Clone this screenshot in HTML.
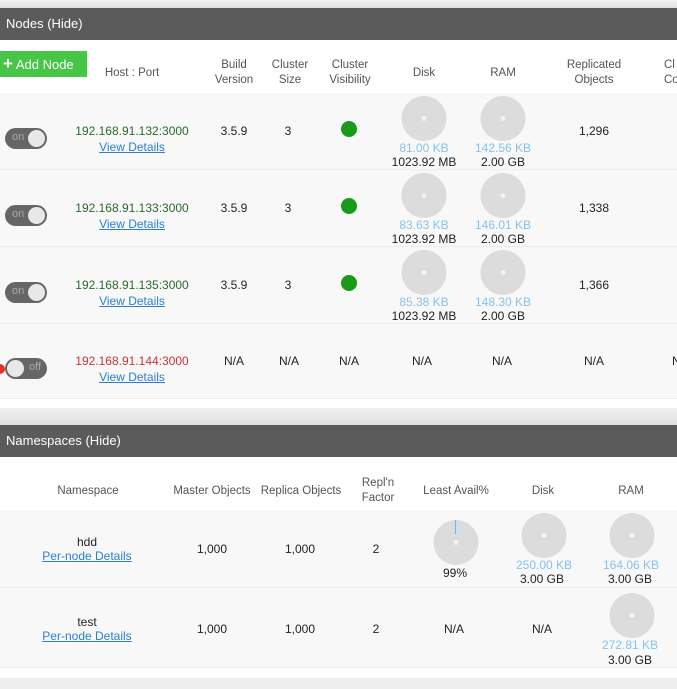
<!DOCTYPE html>
<html><head><meta charset="utf-8"><style>
*{margin:0;padding:0;box-sizing:border-box}
body{width:677px;height:689px;overflow:hidden;background:#eeeeee;font-family:"Liberation Sans",sans-serif;font-size:12px;color:#222;position:relative}
.a{position:absolute}
.bar{position:absolute;left:0;width:677px;height:32px;background:#5b5b5b;color:#fff;font-size:13px;line-height:32px;padding-left:6px}
.white{position:absolute;left:0;width:677px;background:#fff}
.row{position:absolute;left:0;width:677px;background:#f8f8f8;border-bottom:1px solid #ececec}
.c{position:absolute;text-align:center;transform:translateX(-50%);white-space:nowrap}
.h{color:#555;font-size:11.5px;line-height:15px}
.pie{position:absolute;width:45px;height:45px;border-radius:50%;background:#dcdcdc;transform:translateX(-50%)}
.pie:after{content:"";position:absolute;left:20px;top:20px;width:5px;height:5px;border-radius:50%;background:#f2f2f2}
.blue{color:#86c3ec}
.lnk{color:#2a7fd4;text-decoration:underline}
.tog{position:absolute;left:5px;width:42px;height:21px;border-radius:11px;background:#666}
.tog i{position:absolute;top:2px;width:17px;height:17px;border-radius:50%;background:#e8e8e8}
.tog span{position:absolute;top:3px;font-size:11px;color:#aaa}
.dot{position:absolute;width:16px;height:16px;border-radius:50%;background:#1a9a1a;transform:translateX(-50%)}
</style></head><body>
<div class="a" style="left:0;top:0;width:677px;height:8px;background:linear-gradient(#f4f4f4,#e2e2e2)"></div>
<div class="bar" style="top:8px">Nodes (Hide)</div>
<div class="white" style="top:40px;height:53px"></div>
<div class="a" style="left:0;top:51px;width:87px;height:26px;background:#47c547;color:#fff;font-size:13px;line-height:26px;padding-left:3px"><b style="font-size:17px">+</b> Add Node</div>
<div class="c h" style="left:132px;top:66px">Host : Port</div>
<div class="c h" style="left:234px;top:58px">Build<br>Version</div>
<div class="c h" style="left:290px;top:58px">Cluster<br>Size</div>
<div class="c h" style="left:350px;top:58px">Cluster<br>Visibility</div>
<div class="c h" style="left:424px;top:66px">Disk</div>
<div class="c h" style="left:503px;top:66px">RAM</div>
<div class="c h" style="left:594px;top:58px">Replicated<br>Objects</div>
<div class="a h" style="left:664px;top:58px;line-height:15px">Cl<br>Conn</div>

<div class="row" style="top:93px;height:77px"></div>
<div class="row" style="top:170px;height:77px"></div>
<div class="row" style="top:247px;height:77px"></div>
<div class="row" style="top:324px;height:75px"></div>
<div class="white" style="top:399px;height:9px"></div>
<div class="a" style="left:0;top:408px;width:677px;height:17px;background:linear-gradient(#efefef,#e0e0e0)"></div>

<!-- row 1 -->
<div class="tog" style="top:128px"><span style="left:7px">on</span><i style="right:2px"></i></div>
<div class="c" style="left:132px;top:124px;color:#2a6a2a">192.168.91.132:3000</div>
<div class="c lnk" style="left:132px;top:140px">View Details</div>
<div class="c" style="left:234px;top:124px">3.5.9</div>
<div class="c" style="left:288px;top:124px">3</div>
<div class="dot" style="left:349px;top:121px"></div>
<div class="pie" style="left:424px;top:96px"></div>
<div class="pie" style="left:503px;top:96px"></div>
<div class="c blue" style="left:424px;top:141px">81.00 KB</div>
<div class="c blue" style="left:503px;top:141px">142.56 KB</div>
<div class="c" style="left:424px;top:155px">1023.92 MB</div>
<div class="c" style="left:503px;top:155px">2.00 GB</div>
<div class="c" style="left:594px;top:124px">1,296</div>
<!-- row 2 -->
<div class="tog" style="top:205px"><span style="left:7px">on</span><i style="right:2px"></i></div>
<div class="c" style="left:132px;top:201px;color:#2a6a2a">192.168.91.133:3000</div>
<div class="c lnk" style="left:132px;top:217px">View Details</div>
<div class="c" style="left:234px;top:201px">3.5.9</div>
<div class="c" style="left:288px;top:201px">3</div>
<div class="dot" style="left:349px;top:198px"></div>
<div class="pie" style="left:424px;top:173px"></div>
<div class="pie" style="left:503px;top:173px"></div>
<div class="c blue" style="left:424px;top:218px">83.63 KB</div>
<div class="c blue" style="left:503px;top:218px">146.01 KB</div>
<div class="c" style="left:424px;top:232px">1023.92 MB</div>
<div class="c" style="left:503px;top:232px">2.00 GB</div>
<div class="c" style="left:594px;top:201px">1,338</div>
<!-- row 3 -->
<div class="tog" style="top:282px"><span style="left:7px">on</span><i style="right:2px"></i></div>
<div class="c" style="left:132px;top:278px;color:#2a6a2a">192.168.91.135:3000</div>
<div class="c lnk" style="left:132px;top:294px">View Details</div>
<div class="c" style="left:234px;top:278px">3.5.9</div>
<div class="c" style="left:288px;top:278px">3</div>
<div class="dot" style="left:349px;top:275px"></div>
<div class="pie" style="left:424px;top:250px"></div>
<div class="pie" style="left:503px;top:250px"></div>
<div class="c blue" style="left:424px;top:295px">85.38 KB</div>
<div class="c blue" style="left:503px;top:295px">148.30 KB</div>
<div class="c" style="left:424px;top:309px">1023.92 MB</div>
<div class="c" style="left:503px;top:309px">2.00 GB</div>
<div class="c" style="left:594px;top:278px">1,366</div>
<!-- row 4 -->
<div class="a" style="left:0;top:364px;width:5px;height:10px;background:#d33;border-radius:0 5px 5px 0"></div>
<div class="tog" style="top:358px"><i style="left:2px"></i><span style="left:24px">off</span></div>
<div class="c" style="left:132px;top:354px;color:#cc3333">192.168.91.144:3000</div>
<div class="c lnk" style="left:132px;top:370px">View Details</div>
<div class="c" style="left:234px;top:354px">N/A</div>
<div class="c" style="left:289px;top:354px">N/A</div>
<div class="c" style="left:349px;top:354px">N/A</div>
<div class="c" style="left:422px;top:354px">N/A</div>
<div class="c" style="left:502px;top:354px">N/A</div>
<div class="c" style="left:594px;top:354px">N/A</div>
<div class="a" style="left:672px;top:354px">N</div>

<!-- Namespaces -->
<div class="bar" style="top:425px">Namespaces (Hide)</div>
<div class="white" style="top:457px;height:53px"></div>
<div class="c h" style="left:88px;top:484px">Namespace</div>
<div class="c h" style="left:212px;top:484px">Master Objects</div>
<div class="c h" style="left:301px;top:484px">Replica Objects</div>
<div class="c h" style="left:378px;top:476px">Repl'n<br>Factor</div>
<div class="c h" style="left:456px;top:484px">Least Avail%</div>
<div class="c h" style="left:543px;top:484px">Disk</div>
<div class="c h" style="left:631px;top:484px">RAM</div>
<div class="row" style="top:510px;height:78px"></div>
<div class="row" style="top:588px;height:80px"></div>
<div class="white" style="top:668px;height:10px"></div>

<div class="c" style="left:87px;top:535px">hdd</div>
<div class="c lnk" style="left:87px;top:549px">Per-node Details</div>
<div class="c" style="left:212px;top:542px">1,000</div>
<div class="c" style="left:300px;top:542px">1,000</div>
<div class="c" style="left:376px;top:542px">2</div>
<div class="pie" style="left:456px;top:520px"></div>
<div class="a" style="left:455px;top:520px;width:1px;height:14px;background:#6ab7e8"></div>
<div class="c" style="left:455px;top:566px">99%</div>
<div class="pie" style="left:544px;top:513px"></div>
<div class="pie" style="left:632px;top:513px"></div>
<div class="c blue" style="left:544px;top:558px">250.00 KB</div>
<div class="c blue" style="left:631px;top:558px">164.06 KB</div>
<div class="c" style="left:542px;top:572px">3.00 GB</div>
<div class="c" style="left:630px;top:572px">3.00 GB</div>

<div class="c" style="left:87px;top:615px">test</div>
<div class="c lnk" style="left:87px;top:629px">Per-node Details</div>
<div class="c" style="left:212px;top:622px">1,000</div>
<div class="c" style="left:300px;top:622px">1,000</div>
<div class="c" style="left:376px;top:622px">2</div>
<div class="c" style="left:454px;top:622px">N/A</div>
<div class="c" style="left:542px;top:622px">N/A</div>
<div class="pie" style="left:632px;top:593px"></div>
<div class="c blue" style="left:630px;top:638px">272.81 KB</div>
<div class="c" style="left:630px;top:653px">3.00 GB</div>
</body></html>
